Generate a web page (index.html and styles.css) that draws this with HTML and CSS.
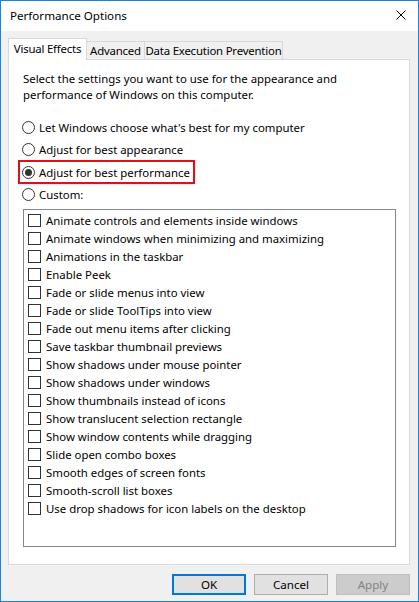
FILE: index.html
```html
<!DOCTYPE html>
<html>
<head>
<meta charset="utf-8">
<link rel="stylesheet" href="styles.css">
</head>
<body>
<div class="window">
  <div class="titlebar">
    <span class="title">Performance Options</span>
    <svg class="close" width="10" height="10" viewBox="0 0 10 10"><path d="M0.5 0.5 L9.5 9.5 M9.5 0.5 L0.5 9.5" stroke="#000" stroke-width="1" fill="none"/></svg>
  </div>
  <div class="body">
    <div class="tabs">
      <div class="tab active t1">Visual Effects</div>
      <div class="tab t2">Advanced</div>
      <div class="tab t3">Data Execution Prevention</div>
    </div>
    <div class="panel">
      <p class="intro">Select the settings you want to use for the appearance and performance of Windows on this computer.</p>
      <div class="radios">
        <label class="radio"><span class="circle"></span>Let Windows choose what's best for my computer</label>
        <label class="radio"><span class="circle"></span>Adjust for best appearance</label>
        <label class="radio highlight"><span class="circle checked"></span>Adjust for best performance</label>
        <label class="radio"><span class="circle"></span>Custom:</label>
      </div>
      <div class="list">
        <div class="item"><span class="box"></span>Animate controls and elements inside windows</div>
        <div class="item"><span class="box"></span>Animate windows when minimizing and maximizing</div>
        <div class="item"><span class="box"></span>Animations in the taskbar</div>
        <div class="item"><span class="box"></span>Enable Peek</div>
        <div class="item"><span class="box"></span>Fade or slide menus into view</div>
        <div class="item"><span class="box"></span>Fade or slide ToolTips into view</div>
        <div class="item"><span class="box"></span>Fade out menu items after clicking</div>
        <div class="item"><span class="box"></span>Save taskbar thumbnail previews</div>
        <div class="item"><span class="box"></span>Show shadows under mouse pointer</div>
        <div class="item"><span class="box"></span>Show shadows under windows</div>
        <div class="item"><span class="box"></span>Show thumbnails instead of icons</div>
        <div class="item"><span class="box"></span>Show translucent selection rectangle</div>
        <div class="item"><span class="box"></span>Show window contents while dragging</div>
        <div class="item"><span class="box"></span>Slide open combo boxes</div>
        <div class="item"><span class="box"></span>Smooth edges of screen fonts</div>
        <div class="item"><span class="box"></span>Smooth-scroll list boxes</div>
        <div class="item"><span class="box"></span>Use drop shadows for icon labels on the desktop</div>
      </div>
    </div>
    <div class="buttons">
      <button class="btn default">OK</button>
      <button class="btn">Cancel</button>
      <button class="btn disabled">Apply</button>
    </div>
  </div>
</div>
</body>
</html>
```
FILE: styles.css
```css
html, body {
  margin: 0;
  padding: 0;
}
body {
  width: 419px;
  height: 602px;
  font-family: "Noto Sans", "Open Sans", sans-serif;
  font-size: 11.4px;
  color: #000;
}
.window {
  box-sizing: border-box;
  width: 419px;
  height: 602px;
  border: 1px solid #1883d7;
  display: flex;
  flex-direction: column;
  background: #f0f0f0;
}
.titlebar {
  height: 30px;
  background: #fff;
  display: flex;
  align-items: center;
  justify-content: space-between;
  padding: 0 12px 0 9px;
  flex: none;
}
.title {
  font-size: 11.6px;
  position: relative;
  top: -1px;
}
.close {
  display: block;
  position: relative;
  top: -1px;
}
.body {
  flex: 1;
  display: flex;
  flex-direction: column;
  padding: 7px 8px 0 7px;
}
.tabs {
  display: flex;
  align-items: flex-end;
  height: 21px;
  position: relative;
  z-index: 1;
}
.tab {
  box-sizing: border-box;
  height: 18px;
  border: 1px solid #d9d9d9;
  border-bottom: none;
  background: #f0f0f0;
  line-height: 17px;
  margin-left: -1px;
  text-align: center;
  white-space: nowrap;
  letter-spacing: -0.2px;
  flex: none;
}
.tab.active {
  height: 22px;
  margin-bottom: -1px;
  margin-left: 0;
  background: #fff;
  line-height: 19px;
}
.t1 { width: 79px; }
.t2 { width: 59px; }
.t3 { width: 139px; }
.panel {
  box-sizing: border-box;
  height: 506px;
  background: #fff;
  border: 1px solid #d9d9d9;
  padding: 11px 13px 0 14px;
  display: flex;
  flex-direction: column;
}
.intro {
  margin: 0;
  line-height: 16px;
  width: 372px;
}
.radios {
  display: flex;
  flex-direction: column;
  align-items: flex-start;
  margin-top: 13px;
}
.radio {
  display: flex;
  align-items: center;
  height: 22.5px;
  white-space: nowrap;
}
.circle {
  box-sizing: border-box;
  width: 13px;
  height: 13px;
  border: 1px solid #333;
  border-radius: 50%;
  background: #fff;
  margin: 0 4px 0 -1px;
  display: flex;
  align-items: center;
  justify-content: center;
}
.circle.checked::after {
  content: "";
  width: 7px;
  height: 7px;
  border-radius: 50%;
  background: #333;
}
.highlight {
  outline: 2px solid #e0101a;
  outline-offset: 0;
  padding: 0 3px 0 3px;
  margin-left: -3px;
  box-shadow: 0 1px 4px rgba(0,0,0,0.35);
  height: 20px;
  margin-top: 1px;
  margin-bottom: 1.5px;
}
.list {
  box-sizing: border-box;
  margin-top: 3px;
  width: 373px;
  height: 338px;
  border: 1px solid #828790;
  padding: 1px 4px;
}
.item {
  display: flex;
  align-items: center;
  height: 18px;
  white-space: nowrap;
}
.box {
  box-sizing: border-box;
  width: 13px;
  height: 13px;
  border: 1px solid #333;
  background: #fff;
  margin-right: 5px;
}
.buttons {
  display: flex;
  justify-content: flex-end;
  gap: 8px;
  margin-top: 9px;
  padding-right: 0;
}
.btn {
  box-sizing: border-box;
  width: 74px;
  height: 21px;
  font-family: inherit;
  font-size: 11.6px;
  background: #e1e1e1;
  border: 1px solid #adadad;
  color: #000;
  padding: 0;
  margin: 0;
}
.btn.default {
  border: 2px solid #0078d7;
}
.btn.disabled {
  background: #cccccc;
  border-color: #bfbfbf;
  color: #838383;
}
```
